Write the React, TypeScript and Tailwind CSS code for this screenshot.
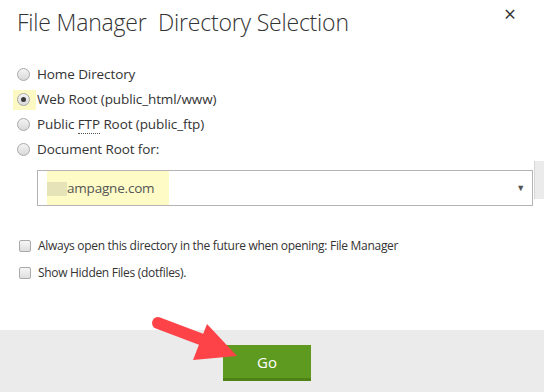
import React from 'react';

function Radio({ checked }: { checked?: boolean }) {
  return (
    <span className="w-[13px] h-[13px] rounded-full border border-[#a9a9a9] bg-gradient-to-b from-[#f4f4f4] to-[#d9d9d9] flex items-center justify-center shrink-0">
      {checked && <span className="w-[5px] h-[5px] rounded-full bg-[#3a3a3a]" />}
    </span>
  );
}

function Check() {
  return (
    <span className="w-[12px] h-[12px] rounded-[2px] border border-[#a9a9a9] bg-gradient-to-b from-[#f6f6f6] to-[#dedede] shrink-0" />
  );
}

export default function App() {
  const opts = [
    { label: <>Home Directory</> },
    { label: <>Web Root (public_html/www)</>, checked: true },
    {
      label: (
        <>
          Public <abbr className="no-underline border-b border-dotted border-[#555]">FTP</abbr> Root (public_ftp)
        </>
      ),
    },
    { label: <>Document Root for:</> },
  ];

  return (
    <div className="w-[544px] h-[392px] bg-white relative overflow-hidden text-[#333] font-['Open_Sans',sans-serif]">
      {/* header */}
      <div className="flex items-start justify-between pl-[17px] pr-[28px] pt-[5px]">
        <h1 className="text-[23px] font-light text-[#333] tracking-[-0.2px] whitespace-pre">File Manager  Directory Selection</h1>
        <span className="text-[21px] leading-none text-[#333] -mt-[1px]">×</span>
      </div>

      {/* radios */}
      <div className="mt-[26px] flex flex-col gap-[7px] pl-[17px]">
        {opts.map((o, i) => (
          <div key={i} className="flex items-center h-[18px]">
            <span className={'w-[23px] h-[20px] -ml-[4px] pl-[4px] flex items-center ' + (o.checked ? 'bg-[#fdf9c3]' : '')}>
              <Radio checked={o.checked} />
            </span>
            <span className="text-[13.5px] tracking-[-0.1px] ml-[1px]">{o.label}</span>
          </div>
        ))}
      </div>

      {/* select */}
      <div className="flex items-start mt-[11px] pl-[37px]">
        <div className="w-[499px] h-[36px] border border-[#b3b3b3] flex items-stretch justify-between">
          <div className="ml-[9px] w-[122px] bg-[#fffbc7] flex items-center">
            <span className="w-[20px] h-[14px] bg-[#e6e3b9] mt-[2px]" />
            <span className="text-[13.5px] text-[#555] tracking-[-0.2px] pt-[2px]">ampagne.com</span>
          </div>
          <span className="text-[9px] text-[#555] self-center mr-[7px] mt-[1px]">▼</span>
        </div>
        <div className="ml-[1px] -mt-[9px] w-[10px] h-[38px] bg-[#ebebeb] border-l border-[#d6d6d6]" />
      </div>

      {/* checkboxes */}
      <div className="mt-[31px] flex flex-col gap-[9px] pl-[19px]">
        <div className="flex items-center gap-[7px]">
          <Check />
          <span className="text-[12px] tracking-[-0.3px] text-[#333]">Always open this directory in the future when opening: File Manager</span>
        </div>
        <div className="flex items-center gap-[7px]">
          <Check />
          <span className="text-[12px] tracking-[-0.3px] text-[#333]">Show Hidden Files (dotfiles).</span>
        </div>
      </div>

      {/* footer */}
      <div className="absolute left-0 right-0 bottom-0 h-[62px] bg-[#ebebeb] pt-[15px] pl-[223px]">
        <button className="w-[88px] h-[36px] bg-[#5e9a20] border-b-[3px] border-[#4e8217] text-white text-[15px] flex items-center justify-center pt-[1px]">
          Go
        </button>
      </div>

      {/* arrow */}
      <svg className="absolute left-0 top-0 pointer-events-none" width="544" height="392">
        <line x1="158" y1="323" x2="203" y2="340" stroke="#fd4347" strokeWidth="12" strokeLinecap="round" />
        <polygon points="207,324 193,360 237,356" fill="#fd4347" />
      </svg>
    </div>
  );
}
